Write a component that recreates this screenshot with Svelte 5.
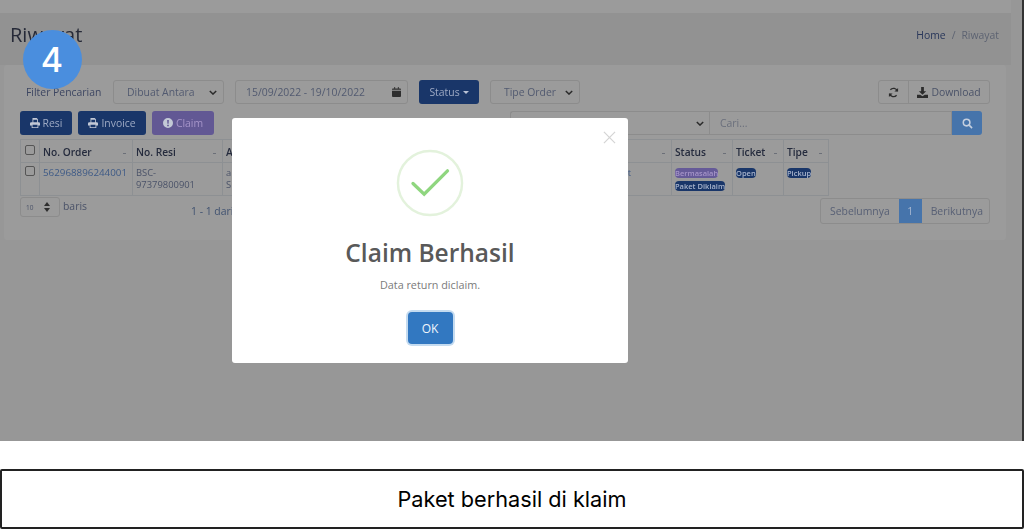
<script>
  const cols = [
    { label: 'No. Order', w: 93 },
    { label: 'No. Resi', w: 90 },
    { label: 'Alamat', w: 180 },
    { label: 'Tanggal', w: 269 },
    { label: 'Status', w: 61 },
    { label: 'Ticket', w: 51 },
    { label: 'Tipe', w: 45 }
  ];
</script>

<div class="screen">
  <div class="page">
    <div class="topbar"></div>
    <div class="heading">
      <h1>Riwayat</h1>
      <div class="crumbs"><span class="home">Home</span><span class="sep">/</span><span>Riwayat</span></div>
    </div>

    <div class="card">
      <div class="filters">
        <span class="filter-label">Filter Pencarian</span>
        <div class="select date-by">Dibuat Antara<svg class="chev" viewBox="0 0 10 6"><path d="M1 1l4 4 4-4" /></svg></div>
        <div class="select date">
          15/09/2022 - 19/10/2022
          <svg class="cal" viewBox="0 0 10 11"><path d="M0 4h10v6a1 1 0 0 1-1 1H1a1 1 0 0 1-1-1zM1 1.500h1.500V0h1v1.500h3V0h1v1.500H9a1 1 0 0 1 1 1V3H0v-.5a1 1 0 0 1 1-1z" /></svg>
        </div>
        <button class="btn navy status">Status<i class="caret"></i></button>
        <div class="select tipe">Tipe Order<svg class="chev" viewBox="0 0 10 6"><path d="M1 1l4 4 4-4" /></svg></div>
        <div class="tools">
          <span class="tool refresh">
            <svg viewBox="0 0 12 12"><path d="M10.300 4.700A4.500 4.500 0 0 0 2.600 3M1.700 7.300A4.500 4.500 0 0 0 9.400 9" /><path class="solid" d="M11 1v4H7zM1 11V7h4z" /></svg>
          </span>
          <span class="tool download">
            <svg viewBox="0 0 12 12"><path class="solid" d="M4.500 0h3v4.500H10L6 8.500 2 4.500h2.500zM0 8.500h3.500L6 10l2.500-1.500H12V12H0z" /></svg>
            Download
          </span>
        </div>
      </div>

      <div class="actions">
        <button class="btn navy resi">
          <svg class="print" viewBox="0 0 12 12"><path d="M3 0h5l1.500 1.500V5h-1V2H4v3H3zM1.500 5h9A1.500 1.500 0 0 1 12 6.500V9h-2v3H2V9H0V6.500A1.500 1.500 0 0 1 1.500 5zM3 8v3h6V8z" /></svg>Resi
        </button>
        <button class="btn navy invoice">
          <svg class="print" viewBox="0 0 12 12"><path d="M3 0h5l1.500 1.500V5h-1V2H4v3H3zM1.500 5h9A1.500 1.500 0 0 1 12 6.500V9h-2v3H2V9H0V6.500A1.500 1.500 0 0 1 1.500 5zM3 8v3h6V8z" /></svg>Invoice
        </button>
        <button class="btn claim">
          <svg class="print" viewBox="0 0 12 12"><path fill-rule="evenodd" d="M6 0a6 6 0 1 1 0 12A6 6 0 0 1 6 0zM5 2.500l.3 4.500h1.400L7 2.500zM5 8v2h2V8z" /></svg>Claim
        </button>
        <div class="search">
          <div class="search-select"><svg class="chev" viewBox="0 0 10 6"><path d="M1 1l4 4 4-4" /></svg></div>
          <div class="search-input">Cari...</div>
          <span class="search-btn">
            <svg viewBox="0 0 12 12"><circle cx="5" cy="5" r="3.600" /><path d="M7.800 7.800L11 11" /></svg>
          </span>
        </div>
      </div>

      <table>
        <colgroup>
          <col style="width:19px" />
          {#each cols as c}
            <col style="width:{c.w}px" />
          {/each}
        </colgroup>
        <thead>
          <tr>
            <th><span class="check"></span></th>
            {#each cols as c}
              <th>{c.label}<i class="sort"></i></th>
            {/each}
          </tr>
        </thead>
        <tbody>
          <tr>
            <td><span class="check row-check"></span></td>
            <td class="link order">562968896244001</td>
            <td>BSC-<br />97379800901</td>
            <td>alamat<br />Surabaya</td>
            <td class="right link">Lihat</td>
            <td>
              <span class="pill purple">Bermasalah</span>
              <span class="pill">Paket Diklaim</span>
            </td>
            <td><span class="pill">Open</span></td>
            <td><span class="pill">Pickup</span></td>
          </tr>
        </tbody>
      </table>

      <div class="footer">
        <div class="rows">
          <div class="per-page">
            10
            <svg class="updown" viewBox="0 0 6 10"><path d="M3 0l3 4H0zM3 10L0 6h6z" /></svg>
          </div>
          <span class="baris">baris</span>
        </div>
        <span class="count">1 - 1 dari 1</span>
        <div class="pager">
          <span>Sebelumnya</span>
          <span class="current">1</span>
          <span>Berikutnya</span>
        </div>
      </div>
    </div>
  </div>

  <div class="step">4</div>

  <div class="modal">
    <svg class="close" viewBox="0 0 14 14"><path d="M1 1l12 12M13 1L1 13" /></svg>
    <svg class="tick" viewBox="0 0 70 70">
      <circle cx="35" cy="35" r="33" />
      <path d="M17.500 35.500L29 46.500 53 22.500" />
    </svg>
    <h2>Claim Berhasil</h2>
    <p>Data return diclaim.</p>
    <button class="ok">OK</button>
  </div>
</div>

<div class="caption">Paket berhasil di klaim</div>

<style>
  :global(body) {
    margin: 0;
    background: #fff;
    font-family: Inter, "Liberation Sans", sans-serif;
  }

  .screen {
    position: relative;
    height: 441px;
    overflow: hidden;
    background: #979797;
    border-right: 2px solid #333;
    box-sizing: border-box;
  }
  .page {
    height: 100%;
    filter: blur(0.5px);
    font-family: "Open Sans", Lato, sans-serif;
    color: #4a5268;
    font-size: 10.400px;
  }

  .topbar {
    height: 13px;
    background: #9b9b9b;
    margin-right: 11px;
  }
  .heading {
    height: 52px;
    box-sizing: border-box;
    margin-right: 11px;
    padding: 9px 12px 0 10px;
    display: flex;
    justify-content: space-between;
    background: #929292;
  }
  h1 {
    margin: 0;
    font-size: 20px;
    line-height: 26px;
    font-weight: 400;
    color: #262a38;
  }
  .crumbs {
    display: flex;
    gap: 6px;
    padding-top: 6px;
    color: #5d6372;
  }
  .home {
    color: #28365a;
  }

  .card {
    margin: 0 16px 0 4px;
    height: 175px;
    box-sizing: border-box;
    padding: 15px 16px 0;
    background: #9b9b9b;
    border-radius: 3px;
  }

  .filters {
    display: flex;
    align-items: center;
    height: 24px;
  }
  .filter-label {
    width: 93px;
    padding-left: 6px;
    box-sizing: border-box;
    white-space: nowrap;
    color: #3d4662;
  }
  .select {
    height: 24px;
    box-sizing: border-box;
    display: flex;
    align-items: center;
    justify-content: space-between;
    padding: 0 6px 0 13px;
    border: 1px solid #8c8c8c;
    border-radius: 3px;
    color: #525a70;
  }
  .date-by {
    width: 111px;
    margin-right: 11px;
  }
  .date {
    width: 173px;
    margin-right: 11px;
    padding-left: 10px;
  }
  .tipe {
    width: 90px;
    margin-left: 11px;
  }
  .chev {
    width: 8px;
    height: 5px;
    fill: none;
    stroke: #2b2b2b;
    stroke-width: 1.800;
  }
  .cal {
    width: 9px;
    height: 10px;
    fill: #2e2e2e;
  }

  .btn {
    height: 24px;
    box-sizing: border-box;
    border: 0;
    border-radius: 3px;
    padding: 0;
    display: inline-flex;
    align-items: center;
    justify-content: center;
    gap: 3px;
    font: inherit;
    font-weight: 500;
  }
  .navy {
    background: #193669;
    color: #9eaac4;
  }
  .status {
    width: 60px;
    gap: 3px;
  }
  .caret {
    border: 3px solid transparent;
    border-top-color: #b9c2d6;
    border-bottom: 0;
  }
  .claim {
    background: #625894;
    color: #a695c9;
    width: 62px;
  }
  .resi {
    width: 52px;
  }
  .invoice {
    width: 68px;
  }
  .print {
    width: 10px;
    height: 10px;
    fill: #c3c9d6;
  }

  .tools {
    margin-left: auto;
    display: flex;
    height: 24px;
    width: 112px;
    border: 1px solid #8c8c8c;
    border-radius: 3px;
    box-sizing: border-box;
    color: #4a5268;
  }
  .tool {
    display: flex;
    align-items: center;
    justify-content: center;
    gap: 3px;
  }
  .tool svg {
    width: 11px;
    height: 11px;
    fill: none;
    stroke: #2c2c2c;
    stroke-width: 1.500;
  }
  .tool .solid {
    fill: #2c2c2c;
    stroke: none;
  }
  .refresh {
    width: 29px;
    border-right: 1px solid #8c8c8c;
  }
  .download {
    flex: 1;
  }

  .actions {
    display: flex;
    gap: 6px;
    margin-top: 7px;
    height: 24px;
  }
  .search {
    margin-left: auto;
    margin-right: 8px;
    width: 472px;
    display: flex;
    height: 24px;
  }
  .search-select {
    width: 199px;
    box-sizing: border-box;
    display: flex;
    align-items: center;
    justify-content: flex-end;
    padding-right: 5px;
    border: 1px solid #8c8c8c;
    border-right: 0;
    border-radius: 3px 0 0 3px;
  }
  .search-input {
    flex: 1;
    box-sizing: border-box;
    padding-left: 10px;
    line-height: 22px;
    border: 1px solid #8c8c8c;
    color: #6a6f7c;
  }
  .search-btn {
    width: 30px;
    display: flex;
    align-items: center;
    justify-content: center;
    background: #4674ab;
    border-radius: 0 3px 3px 0;
  }
  .search-btn svg {
    width: 11px;
    height: 11px;
    fill: none;
    stroke: #c5cfdf;
    stroke-width: 1.700;
  }

  table {
    margin-top: 4px;
    width: 808px;
    table-layout: fixed;
    border-collapse: collapse;
    font-size: 9.400px;
  }
  th,
  td {
    border: 1px solid #8d9093;
    padding: 0 3px;
    text-align: left;
    vertical-align: top;
    overflow: hidden;
  }
  th {
    position: relative;
    height: 23px;
    padding-top: 5px;
    box-sizing: border-box;
    color: #252b3d;
    font-size: 10.200px;
    font-weight: 600;
    white-space: nowrap;
  }
  td {
    height: 33px;
    padding-top: 4px;
    box-sizing: border-box;
    line-height: 12px;
  }
  .link {
    color: #3e5a86;
    white-space: nowrap;
  }
  .order {
    font-size: 9.800px;
  }
  .right {
    text-align: right;
    padding-right: 40px;
  }
  .sort {
    position: absolute;
    right: 6px;
    top: 13px;
    width: 3px;
    height: 1px;
    background: #6b6f78;
  }
  .check {
    display: block;
    width: 8px;
    height: 8px;
    border: 1px solid #555;
    border-radius: 2px;
    margin-left: 1px;
  }
  .row-check {
    margin-top: -1px;
  }
  .pill {
    display: table;
    margin: 1px 0 3px;
    padding: 0 4px;
    border-radius: 4px;
    background: #193669;
    color: #a8b4cc;
    font-size: 7.500px;
    line-height: 10px;
    font-weight: 600;
    white-space: nowrap;
  }
  .purple {
    background: #655a98;
    color: #a695c9;
  }

  .footer {
    display: flex;
    align-items: flex-start;
    margin-top: 1px;
    position: relative;
  }
  .rows {
    display: flex;
    gap: 3px;
    width: 171px;
  }
  .baris {
    padding-top: 2px;
  }
  .per-page {
    width: 40px;
    height: 20px;
    box-sizing: border-box;
    display: flex;
    justify-content: space-between;
    align-items: center;
    padding: 0 9px 0 5px;
    border: 1px solid #8c8c8c;
    border-radius: 3px;
    font-size: 6.500px;
  }
  .updown {
    width: 6px;
    height: 10px;
    fill: #2e2e2e;
  }
  .count {
    padding-top: 7px;
    color: #3f5170;
  }
  .pager {
    margin-left: auto;
    margin-top: 1px;
    display: flex;
    height: 26px;
    width: 170px;
    border: 1px solid #8c8c8c;
    border-radius: 3px;
    box-sizing: border-box;
    justify-content: space-between;
    color: #586075;
  }
  .pager span {
    display: flex;
    align-items: center;
    padding: 0 9px;
  }
  .pager .current {
    background: #4674ab;
    color: #a9bad2;
    padding: 0 8.500px;
  }

  .step {
    position: absolute;
    left: 22.500px;
    top: 30px;
    width: 59px;
    height: 59px;
    border-radius: 50%;
    background: #4a8ede;
    color: #fff;
    font: 500 34px/59px Inter, sans-serif;
    text-align: center;
  }

  .modal {
    position: absolute;
    left: 232px;
    top: 118px;
    width: 396px;
    height: 245px;
    box-sizing: border-box;
    padding-top: 31px;
    display: flex;
    flex-direction: column;
    align-items: center;
    background: #fff;
    border-radius: 3px;
    font-family: "Open Sans", Lato, sans-serif;
  }
  .close {
    position: absolute;
    right: 12px;
    top: 13px;
    width: 13px;
    height: 13px;
    fill: none;
    stroke: #d4d4d4;
    stroke-width: 1.300;
  }
  .tick {
    width: 68px;
    height: 68px;
    fill: none;
  }
  .tick circle {
    stroke: #e3f2dc;
    stroke-width: 2.500;
  }
  .tick path {
    stroke: #8fd67f;
    stroke-width: 3.400;
    stroke-linecap: round;
  }
  h2 {
    margin: 21px 0 0;
    font-size: 24.500px;
    line-height: 30px;
    font-weight: 600;
    color: #595959;
  }
  p {
    margin: 10px 0 0;
    font-size: 10.800px;
    line-height: 14px;
    color: #7a7a7a;
  }
  .ok {
    margin-top: 20px;
    width: 45px;
    height: 32px;
    border: 0;
    border-radius: 4px;
    background: #3278c1;
    color: #f0f5fb;
    font: 500 12px "Open Sans", sans-serif;
    box-shadow: 0 0 0 2px #c4dbf0;
  }

  .caption {
    margin-top: 28px;
    height: 60px;
    box-sizing: border-box;
    border: 2px solid #222;
    border-radius: 2px;
    display: flex;
    align-items: center;
    justify-content: center;
    font-size: 21.700px;
    color: #000;
  }
</style>
